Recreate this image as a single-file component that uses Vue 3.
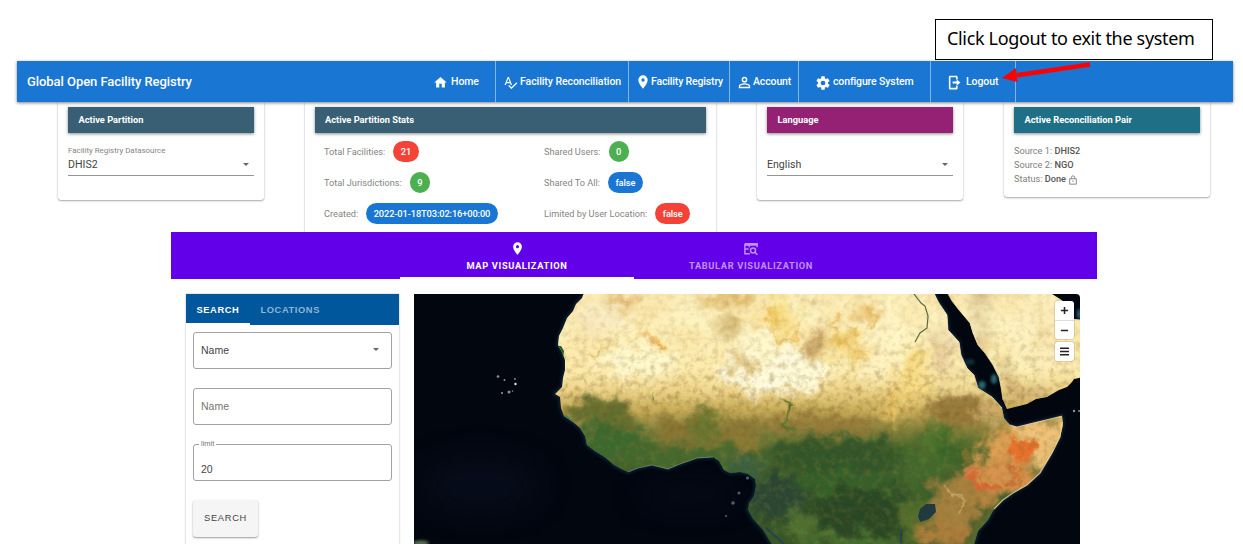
<script setup>
const navItems = [
  { key: 'home', label: 'Home', path: 'M10,20V14H14V20H19V12H22L12,3L2,12H5V20H10Z' },
  { key: 'reconcile', label: 'Facility Reconciliation', path: 'M21.59,11.59L13.5,19.68L9.83,16L8.42,17.41L13.5,22.5L23,13M6.43,11L8.5,5.5L10.57,11M12.45,16H14.54L9.43,3H7.57L2.46,16H4.55L5.67,13H11.31L12.45,16Z' },
  { key: 'registry', label: 'Facility Registry', path: 'M12,11.5A2.5,2.5 0 0,1 9.5,9A2.5,2.5 0 0,1 12,6.5A2.5,2.5 0 0,1 14.5,9A2.5,2.5 0 0,1 12,11.5M12,2A7,7 0 0,0 5,9C5,14.25 12,22 12,22C12,22 19,14.25 19,9A7,7 0 0,0 12,2Z' },
  { key: 'account', label: 'Account', path: 'M12,4A4,4 0 0,1 16,8A4,4 0 0,1 12,12A4,4 0 0,1 8,8A4,4 0 0,1 12,4M12,6A2,2 0 0,0 10,8A2,2 0 0,0 12,10A2,2 0 0,0 14,8A2,2 0 0,0 12,6M12,13C14.67,13 20,14.33 20,17V20H4V17C4,14.33 9.33,13 12,13M12,14.9C9.03,14.9 5.9,16.36 5.9,17V18.1H18.1V17C18.1,16.36 14.97,14.9 12,14.9Z' },
  { key: 'configure', label: 'configure System', path: 'M12,15.5A3.5,3.5 0 0,1 8.5,12A3.5,3.5 0 0,1 12,8.5A3.5,3.5 0 0,1 15.5,12A3.5,3.5 0 0,1 12,15.5M19.43,12.97C19.47,12.65 19.5,12.33 19.5,12C19.5,11.67 19.47,11.34 19.43,11L21.54,9.37C21.73,9.22 21.78,8.95 21.66,8.73L19.66,5.27C19.54,5.05 19.27,4.96 19.05,5.05L16.56,6.05C16.04,5.66 15.5,5.32 14.87,5.07L14.5,2.42C14.46,2.18 14.25,2 14,2H10C9.75,2 9.54,2.18 9.5,2.42L9.13,5.07C8.5,5.32 7.96,5.66 7.44,6.05L4.95,5.05C4.73,4.96 4.46,5.05 4.34,5.27L2.34,8.73C2.21,8.95 2.27,9.22 2.46,9.37L4.57,11C4.53,11.34 4.5,11.67 4.5,12C4.5,12.33 4.53,12.65 4.57,12.97L2.46,14.63C2.27,14.78 2.21,15.05 2.34,15.27L4.34,18.73C4.46,18.95 4.73,19.03 4.95,18.95L7.44,17.94C7.96,18.34 8.5,18.68 9.13,18.93L9.5,21.58C9.54,21.82 9.75,22 10,22H14C14.25,22 14.46,21.82 14.5,21.58L14.87,18.93C15.5,18.67 16.04,18.34 16.56,17.94L19.05,18.95C19.27,19.03 19.54,18.95 19.66,18.73L21.66,15.27C21.78,15.05 21.73,14.78 21.54,14.63L19.43,12.97Z' },
  { key: 'logout', label: 'Logout', path: 'M4,1H15A2,2 0 0 1 17,3V7H14.5V3.500H5.500V20.500H14.5V17H17V21A2,2 0 0 1 15,23H5A2,2 0 0 1 3,21V3A2,2 0 0 1 5,1ZM9,10.500H15.5V7L21.5,12L15.5,17V13.500H9Z' },
]
const marker = navItems[2].path

const statsLeft = [
  { label: 'Total Facilities:', value: '21', color: 'red' },
  { label: 'Total Jurisdictions:', value: '9', color: 'green' },
  { label: 'Created:', value: '2022-01-18T03:02:16+00:00', color: 'blue' },
]
const statsRight = [
  { label: 'Shared Users:', value: '0', color: 'green' },
  { label: 'Shared To All:', value: 'false', color: 'blue' },
  { label: 'Limited by User Location:', value: 'false', color: 'red' },
]

const africa = 'M585,290 L582,298 576,304 573,311 567,318 563,328 559,336 558,345 562,352 565,360 565,370 563,378 562,387 555,394 560,397 561,408 564,416 573,422 580,428 585,436 587,445 595,451 606,458 614,465 621,469 628,472 638,468 652,465 668,469 680,464 697,458 713,457 719,461 724,470 730,473 740,472 748,474 755,479 756,486 754,496 749,503 748,510 753,519 763,530 774,548 973,548 978,531 988,520 994,509 1003,500 1013,493 1027,485 1040,473 1052,453 1060,437 1063,425 1062,416 1050,419 1033,423 1017,427 1010,425 1004,418 1002,408 992,397 978,388 974,375 967,368 961,355 959,342 948,330 947,315 939,303 933,290Z'
const arabia = 'M946,290 L952,301 959,310 970,323 973,333 978,345 985,353 993,365 999,377 1001,387 1003,400 1007,409 1027,404 1036,399 1047,397 1059,390 1067,387 1072,382 1074,379 1084,377 1084,320 1074,319 1070,306 1060,299 1052,294 1050,290Z'
</script>

<template>
  <div class="page">
    <header class="navbar">
      <div class="brand">Global Open Facility Registry</div>
      <nav class="nav">
        <a v-for="item in navItems" :key="item.key" class="nav-item" :class="item.key">
          <svg class="nav-icon" viewBox="0 0 24 24"><path :d="item.path" fill-rule="evenodd" /></svg>
          <span>{{ item.label }}</span>
        </a>
      </nav>
    </header>

    <section class="cards">
      <article class="card">
        <h3 class="card-title slate">Active Partition</h3>
        <label class="select-label">Facility Registry Datasource</label>
        <div class="select"><span>DHIS2</span><i class="caret"></i></div>
      </article>
      <article class="card tall">
        <h3 class="card-title slate stats-title">Active Partition Stats</h3>
        <div class="stats">
          <div class="stat-col">
            <div v-for="s in statsLeft" :key="s.label" class="stat">
              <span>{{ s.label }}</span><b class="chip" :class="s.color">{{ s.value }}</b>
            </div>
          </div>
          <div class="stat-col">
            <div v-for="s in statsRight" :key="s.label" class="stat">
              <span>{{ s.label }}</span><b class="chip" :class="s.color">{{ s.value }}</b>
            </div>
          </div>
        </div>
      </article>
      <article class="card">
        <h3 class="card-title plum">Language</h3>
        <label class="select-label"></label>
        <div class="select"><span>English</span><i class="caret"></i></div>
      </article>
      <article class="card pair">
        <h3 class="card-title teal">Active Reconciliation Pair</h3>
        <p>Source 1: <b>DHIS2</b></p>
        <p>Source 2: <b>NGO</b></p>
        <p>Status: <b>Done</b>
          <svg class="lock" viewBox="0 0 24 24"><path d="M4 9H20V22H4ZM8 9V6A4 4 0 0 1 16 6V9M12 13V17" /></svg>
        </p>
      </article>
    </section>

    <section class="view-tabs">
      <div class="view-tab active">
        <svg class="tab-icon" viewBox="0 0 24 24"><path :d="marker" fill-rule="evenodd" /></svg>
        <span>MAP VISUALIZATION</span>
      </div>
      <div class="view-tab">
        <svg class="tab-icon table" viewBox="0 0 24 24">
          <path d="M1.500 3H22.500V9M1.500 3V20H10M1.500 5H22.500M1.500 12H8M9 5V9" />
          <circle cx="15.500" cy="14.500" r="4.300" /><path d="M18.500 17.500L23 22" />
        </svg>
        <span>TABULAR VISUALIZATION</span>
      </div>
    </section>

    <main class="workspace">
      <aside class="panel">
        <div class="panel-tabs">
          <span class="panel-tab active">SEARCH</span>
          <span class="panel-tab">LOCATIONS</span>
        </div>
        <div class="form">
          <div class="field"><span>Name</span><i class="caret"></i></div>
          <div class="field placeholder"><span>Name</span></div>
          <div class="field limit"><label>limit</label><span>20</span></div>
          <button class="search-btn">SEARCH</button>
        </div>
      </aside>

      <div class="map">
        <svg class="map-canvas" viewBox="414 294 666 250" preserveAspectRatio="none" color-interpolation-filters="sRGB">
          <defs>
            <linearGradient id="climate" gradientUnits="userSpaceOnUse" x1="0" y1="294" x2="0" y2="544">
              <stop offset="0" stop-color="#fbe8ae" />
              <stop offset=".3" stop-color="#fdebac" />
              <stop offset=".38" stop-color="#efd488" />
              <stop offset=".47" stop-color="#c9ac59" />
              <stop offset=".54" stop-color="#86823d" />
              <stop offset=".62" stop-color="#4a682c" />
              <stop offset=".8" stop-color="#33572a" />
              <stop offset="1" stop-color="#365527" />
            </linearGradient>
            <linearGradient id="dry" x1="0" y1="0" x2="0" y2="1">
              <stop offset=".45" stop-color="#fff" /><stop offset=".9" stop-color="#000" />
            </linearGradient>
            <linearGradient id="wet" x1="0" y1="0" x2="0" y2="1">
              <stop offset=".1" stop-color="#555" /><stop offset=".45" stop-color="#fff" /><stop offset=".6" stop-color="#999" />
            </linearGradient>
            <mask id="desert"><rect x="540" y="290" width="545" height="130" fill="url(#dry)" /></mask>
            <mask id="savanna"><rect x="540" y="290" width="545" height="260" fill="url(#wet)" /></mask>
            <clipPath id="land"><path :d="africa" /><path :d="arabia" /></clipPath>
            <filter id="soft14" x="-50%" y="-80%" width="200%" height="260%"><feGaussianBlur stdDeviation="14" /></filter>
            <filter id="soft5" x="-50%" y="-50%" width="200%" height="200%"><feGaussianBlur stdDeviation="4.500" /></filter>
            <filter id="soft2" x="-50%" y="-50%" width="200%" height="200%"><feGaussianBlur stdDeviation="1.600" /></filter>
            <filter id="rough" x="-5%" y="-5%" width="110%" height="110%">
              <feTurbulence type="fractalNoise" baseFrequency=".055" numOctaves="5" seed="4" result="n" />
              <feDisplacementMap in="SourceGraphic" in2="n" scale="34" xChannelSelector="R" yChannelSelector="G" />
              <feGaussianBlur stdDeviation=".6" />
            </filter>
            <filter id="grain" x="0" y="0" width="100%" height="100%">
              <feTurbulence type="fractalNoise" baseFrequency=".16" numOctaves="4" seed="11" />
              <feColorMatrix values="0 0 0 0 .45  0 0 0 0 .34  0 0 0 0 .12  1.500 1.500 0 0 -1.350" />
            </filter>
            <filter id="speckle" x="0" y="0" width="100%" height="100%">
              <feTurbulence type="fractalNoise" baseFrequency=".14" numOctaves="4" seed="37" />
              <feColorMatrix values="0 0 0 0 .60  0 0 0 0 .64  0 0 0 0 .30  1.500 1.500 0 0 -1.400" />
            </filter>
            <filter id="glow" x="0" y="0" width="100%" height="100%">
              <feTurbulence type="fractalNoise" baseFrequency=".018 .026" numOctaves="5" seed="29" />
              <feColorMatrix values="0 0 0 0 1  0 0 0 0 .98  0 0 0 0 .8  2.200 2 0 0 -1.750" />
            </filter>
          </defs>
          <rect x="414" y="294" width="666" height="250" fill="#02060f" />
          <g filter="url(#soft14)" fill="#080e1e">
            <ellipse cx="480" cy="485" rx="60" ry="28" opacity=".7" /><ellipse cx="690" cy="495" rx="50" ry="10" opacity=".6" />
          </g>
          <path :d="africa" fill="none" stroke="#102c42" stroke-width="4" filter="url(#soft2)" opacity=".7" />
          <g clip-path="url(#land)">
            <rect x="414" y="294" width="666" height="250" fill="url(#climate)" />
            <g filter="url(#rough)">
              <g filter="url(#soft5)">
                <ellipse cx="640" cy="362" rx="40" ry="12" fill="#fff8cc" />
                <ellipse cx="775" cy="372" rx="55" ry="22" fill="#fffadc" />
                <ellipse cx="755" cy="352" rx="22" ry="24" fill="#fff6cc" />
                <ellipse cx="875" cy="335" rx="30" ry="40" fill="#fff3c0" />
                <ellipse cx="605" cy="318" rx="28" ry="15" fill="#f8e2ba" />
                <ellipse cx="780" cy="314" rx="14" ry="24" fill="#f8d675" />
                <ellipse cx="848" cy="350" rx="22" ry="18" fill="#f4d275" />
                <ellipse cx="866" cy="312" rx="12" ry="12" fill="#eecb80" />
                <ellipse cx="817" cy="343" rx="11" ry="15" fill="#c8a263" />
                <ellipse cx="813" cy="297" rx="8" ry="4" fill="#b38a4c" />
                <ellipse cx="728" cy="327" rx="12" ry="10" fill="#d7ba74" />
                <ellipse cx="745" cy="362" rx="8" ry="14" fill="#dfc17c" />
                <ellipse cx="720" cy="300" rx="34" ry="6" fill="#dcb561" />
                <ellipse cx="620" cy="299" rx="18" ry="5" fill="#e0b76f" />
                <ellipse cx="912" cy="375" rx="14" ry="25" fill="#f8dc84" />
                <ellipse cx="893" cy="408" rx="14" ry="14" fill="#e9c567" />
                <ellipse cx="945" cy="345" rx="12" ry="38" fill="#ead09c" />
                <ellipse cx="955" cy="410" rx="28" ry="18" fill="#98793c" />
                <ellipse cx="820" cy="424" rx="62" ry="7" fill="#97793a" />
                <ellipse cx="705" cy="430" rx="50" ry="13" fill="#8a7635" />
                <ellipse cx="600" cy="412" rx="35" ry="14" fill="#656e2f" />
                <ellipse cx="610" cy="442" rx="36" ry="20" fill="#3b6930" />
                <ellipse cx="680" cy="456" rx="65" ry="11" fill="#44692f" />
                <ellipse cx="705" cy="425" rx="16" ry="13" fill="#667530" />
                <ellipse cx="742" cy="440" rx="17" ry="12" fill="#8b7936" />
                <ellipse cx="745" cy="465" rx="22" ry="9" fill="#3a6040" />
                <ellipse cx="838" cy="456" rx="68" ry="18" fill="#31552a" />
                <ellipse cx="840" cy="483" rx="60" ry="11" fill="#35602a" />
                <ellipse cx="778" cy="497" rx="28" ry="22" fill="#294633" />
                <ellipse cx="855" cy="512" rx="46" ry="24" fill="#284725" />
                <ellipse cx="800" cy="524" rx="16" ry="14" fill="#4e7132" />
                <ellipse cx="850" cy="541" rx="55" ry="6" fill="#4a7331" />
                <ellipse cx="920" cy="465" rx="24" ry="22" fill="#42692d" />
                <ellipse cx="940" cy="440" rx="18" ry="18" fill="#4f752e" />
                <ellipse cx="947" cy="448" rx="12" ry="12" fill="#326529" />
                <ellipse cx="1040" cy="440" rx="30" ry="26" fill="#f0c279" />
                <ellipse cx="1004" cy="450" rx="24" ry="18" fill="#e0a055" />
                <ellipse cx="1000" cy="477" rx="38" ry="16" fill="#d8944d" />
                <ellipse cx="955" cy="505" rx="24" ry="30" fill="#a6803f" />
                <ellipse cx="918" cy="518" rx="18" ry="26" fill="#526d2c" />
                <ellipse cx="948" cy="535" rx="30" ry="12" fill="#ad7d3d" />
                <ellipse cx="988" cy="500" rx="16" ry="8" fill="#b5833f" />
                <ellipse cx="990" cy="412" rx="10" ry="18" fill="#d0ab6e" />
              </g>
              <g filter="url(#soft2)">
                <path d="M630,340 Q648,329 666,341 Q648,347 630,340Z" fill="#eba947" />
                <path d="M595,352 Q612,344 640,326" fill="none" stroke="#e2bd67" stroke-width="3" />
                <path d="M766,300 Q771,330 785,345 Q800,335 803,302" fill="none" stroke="#eabb4d" stroke-width="3" />
                <path d="M835,315 Q830,345 860,361 M850,325 Q852,345 868,352 M868,300 Q866,320 877,332" fill="none" stroke="#e7b956" stroke-width="2.500" />
                <path d="M1008,444 Q1025,435 1036,445 Q1028,454 1020,472 Q1013,454 1008,444Z" fill="#ea6f2d" />
                <ellipse cx="984" cy="484" rx="16" ry="6" fill="#d96a36" />
                <ellipse cx="974" cy="471" rx="9" ry="5" fill="#cc7a44" />
                <ellipse cx="1010" cy="477" rx="9" ry="5" fill="#cf6f38" />
                <ellipse cx="970" cy="456" rx="11" ry="6" fill="#75702f" />
                <path d="M948,482l9,14 2,16" stroke="#dcb87a" stroke-width="3" fill="none" />
                <path d="M780,398l8,6 8,4 -6,4 6,14 -3,5 -5,-16z" fill="#4b732a" />
                <path d="M648,401l7,-14 -2,15z" fill="#4b7328" />
              </g>
            </g>
            <path d="M1001,507 L996,548 L965,548 975,526 988,511 1003,498 1012,493Z" fill="#53692f" filter="url(#soft2)" />
            <g filter="url(#soft5)">
              <ellipse cx="980" cy="318" rx="11" ry="34" fill="#d2b17c" opacity=".8" />
              <ellipse cx="1040" cy="335" rx="28" ry="38" fill="#fbe8b2" />
              <path d="M1038,300Q1050,325 1032,350" fill="none" stroke="#edcb7e" stroke-width="5" />
              <path d="M1002,360L1015,395L1045,390" fill="none" stroke="#ceac73" stroke-width="12" opacity=".8" />
            </g>
            <g mask="url(#desert)"><rect x="540" y="290" width="545" height="130" filter="url(#glow)" opacity=".6" /></g>
            <g mask="url(#savanna)"><rect x="540" y="290" width="545" height="260" filter="url(#grain)" opacity=".42" /></g>
            <rect x="540" y="400" width="545" height="150" filter="url(#speckle)" opacity=".22" />
            <path d="M920,509l6,-5 9,0 1,8 -7,7 -9,3 -2,-6z" fill="#203a40" />
            <path d="M902,546q-2,-10 0,-16M766,528l18,16" stroke="#203d5c" stroke-width="2" fill="none" opacity=".8" />
            <path d="M914,294l7,9 4,3 3,10 -1,12 -7,5 -5,9" stroke="#5d6a3f" stroke-width="1.200" fill="none" />
            <path d="M556,346l5,0 3,5 -1,8 -4,-2z" fill="#1e5a2c" />
            <path d="M560,414l8,2 5,6 -4,2 -8,-5z" fill="#417c5c" />
          </g>
          <path d="M933,294 L939,303 947,315 948,330 959,342 961,355 967,368 974,375 978,388 992,397 1002,408 M1010,425 L1017,427 1033,423 1050,419 1062,416 M948,294 L952,301 959,310 970,323 973,333 978,345 985,353 993,365 999,377 1001,387 1003,400" stroke="#f2dca8" stroke-width="1" fill="none" opacity=".7" />
          <path d="M1062,422L1060,437 1052,453 1040,473 1027,485 1013,493 1003,500 994,509" stroke="#f3dca0" stroke-width="1.200" fill="none" opacity=".75" />
          <path d="M628,472 L638,468 652,465 668,469 680,464 697,458 713,457" stroke="#8ca588" stroke-width="1" fill="none" opacity=".55" />
          <g filter="url(#soft2)" fill="#2d6873">
            <ellipse cx="982" cy="385" rx="3.500" ry="4" /><ellipse cx="994" cy="379" rx="3" ry="5" />
            <ellipse cx="970" cy="362" rx="5" ry="3" opacity=".4" />
            <ellipse cx="1079" cy="314" rx="2" ry="5" />
            <ellipse cx="421" cy="543" rx="8" ry="2.500" fill="#5d7759" />
          </g>
          <g fill="#8a929b">
            <circle cx="498" cy="376.500" r="1.300" /><circle cx="504.500" cy="380" r="1" /><circle cx="515" cy="379" r=".9" />
            <circle cx="515.500" cy="384" r="1.200" fill="#e3e8ec" /><circle cx="509" cy="392" r="1.500" /><circle cx="502" cy="393" r="1.100" /><circle cx="512.500" cy="391" r=".8" />
            <g fill="#4b6070"><circle cx="747.500" cy="478" r="1.600" /><circle cx="739" cy="493" r="1.500" /><circle cx="733" cy="503" r="1.800" /><circle cx="726" cy="516" r="1" /></g>
            <circle cx="1074" cy="411" r="1.200" /><circle cx="1079" cy="411" r="1" />
          </g>
        </svg>
        <div class="map-controls">
          <div class="zoom-group">
            <button><svg viewBox="0 0 10 10"><path d="M5 1V9M1 5H9" /></svg></button>
            <button><svg viewBox="0 0 10 10"><path d="M1 5H9" /></svg></button>
          </div>
          <button class="layers"><svg viewBox="0 0 10 10"><path d="M0 1.300H10M0 5H10M0 8.700H10" /></svg></button>
        </div>
      </div>
    </main>

    <div class="callout">Click Logout to exit the system</div>
    <svg class="arrow" viewBox="0 0 95 30"><path d="M89 4.500L16 15.300" /><polygon points="1,18 15,8 16.500,22" /></svg>
  </div>
</template>

<style>
body { background: #fff; }
</style>

<style scoped>
* { box-sizing: border-box; }
.page { position: relative; width: 1243px; height: 544px; overflow: hidden; padding-top: 61px; font-family: Roboto, "Liberation Sans", sans-serif; color: #555; background: #fff; white-space: nowrap; }
.navbar { position: relative; z-index: 2; display: flex; width: 1216px; height: 41px; margin-left: 17px; background: #1976d2; color: #fff; box-shadow: 0 1px 3px rgba(0,0,0,.5); }
.brand { width: 403px; padding-left: 10px; font-size: 13px; font-weight: 500; line-height: 41px; letter-spacing: -.06px; }
.nav { display: flex; }
.nav-item { display: flex; align-items: center; height: 41px; border-right: 1px solid #83b5e7; font-size: 10.500px; font-weight: 500; letter-spacing: -.07px; }
.nav-item span { position: relative; top: -.5px; }
.nav-icon { flex: none; width: 15px; height: 15px; margin-top: 2px; fill: #fff; }
.home { width: 76px; padding-left: 13px; gap: 3px; }
.reconcile { width: 133px; padding-left: 7px; gap: 2px; }
.registry { width: 101px; padding-left: 6px; letter-spacing: -.16px; }
.registry .nav-icon { width: 16px; height: 16px; margin-top: 1px; }
.account { width: 69px; padding-left: 6px; letter-spacing: -.12px; }
.account .nav-icon { width: 17px; height: 17px; }
.configure { width: 132px; padding-left: 16px; gap: 2px; letter-spacing: -.12px; }
.configure .nav-icon { width: 16px; height: 16px; }
.logout { width: 85px; padding-left: 16px; gap: 4px; }

.cards { display: grid; grid-template-columns: 206px 411px 206px 206px; column-gap: 41px; align-items: start; height: 130px; padding-left: 58px; overflow: hidden; }
.card { height: 98px; padding: 5px 10.500px 0 10px; border-radius: 0 0 3px 3px; box-shadow: 0 1px 2px rgba(0,0,0,.33), 0 0 1px rgba(0,0,0,.2); }
.card.tall { height: 150px; padding-right: 10px; }
.card-title { height: 26px; margin: 0; padding-left: 10.500px; line-height: 26px; color: #fff; font-size: 9.300px; font-weight: 700; box-shadow: 0 1px 3px rgba(0,0,0,.45); }
.stats-title { padding-left: 10px; }
.slate { background: #385f73; }
.plum { background: #952175; }
.teal { background: #1f7087; }
.select-label { display: block; height: 25px; padding-top: 12px; font-size: 7.900px; line-height: 12px; color: #858585; }
.select { display: flex; align-items: center; justify-content: space-between; height: 18px; padding: 1px 5px 5px 0; border-bottom: 1px solid #949494; font-size: 10.600px; line-height: 12px; color: #444; }
.caret { width: 0; height: 0; border: 3.500px solid transparent; border-top: 3.500px solid #666; border-bottom: 0; }
.stats { display: grid; grid-template-columns: 220px 1fr; padding: 8px 0 0 9px; font-size: 9.200px; color: #858585; }
.stat { display: flex; align-items: center; gap: 8px; height: 21px; margin-bottom: 10px; }
.chip { height: 21px; padding: 0 7.500px; border-radius: 11px; color: #fff; font-size: 9.300px; font-weight: 500; line-height: 21px; letter-spacing: -.12px; }
.red { background: #f44336; }
.green { background: #4caf50; }
.blue { background: #1976d2; }
.pair { height: 95px; }
.pair .card-title { margin-bottom: 10.500px; }
.pair p { margin: 0; height: 14.400px; line-height: 14.400px; font-size: 9.200px; color: #808080; }
.pair b { font-weight: 500; color: #555; }
.lock { width: 10px; height: 10px; margin-left: 2px; vertical-align: -2.500px; fill: none; stroke: #808080; stroke-width: 2.200; }

.view-tabs { display: flex; justify-content: center; width: 926px; height: 47px; margin-left: 171px; background: #6200ea; }
.view-tab { display: flex; flex-direction: column; align-items: center; width: 234px; height: 47px; padding-top: 9px; color: #c091f6; font-size: 9.300px; font-weight: 700; letter-spacing: .64px; line-height: 12px; }
.view-tab.active { color: #fff; border-bottom: 2px solid #fff; }
.tab-icon { width: 15px; height: 15px; margin-bottom: 4px; fill: currentColor; }
.tab-icon.table { width: 14px; height: 14px; margin: 1px 0 4px; fill: none; stroke: currentColor; stroke-width: 2.500; }

.workspace { display: flex; gap: 15px; height: 265px; padding: 15px 0 0 186px; }
.panel { width: 213px; height: 260px; box-shadow: 0 0 2px rgba(0,0,0,.3); font-family: "Liberation Sans", Arial, sans-serif; }
.panel-tabs { display: flex; height: 31px; background: #01579b; }
.panel-tab { height: 31px; padding: 0 10.500px; color: #8db5d6; font-size: 9.300px; font-weight: 700; letter-spacing: .6px; line-height: 32px; }
.panel-tab.active { width: 64px; color: #fff; border-bottom: 2px solid #fff; }
.form { padding: 7px 7px 0; }
.field { position: relative; display: flex; align-items: center; justify-content: space-between; height: 37px; margin-bottom: 19px; padding: 0 12px 2px 7px; border: 1px solid #a2a2a2; border-radius: 3px; font-size: 10.500px; color: #444; }
.field.placeholder { color: #757575; }
.field.limit { padding-top: 14px; }
.limit label { position: absolute; left: 5px; top: -6px; padding: 0 2px; background: #fff; font-size: 7.500px; line-height: 10px; color: #777; }
.search-btn { width: 65px; height: 37px; padding: 0 0 2px; border: 0; border-radius: 3px; background: #f5f5f5; box-shadow: 0 1px 2px rgba(0,0,0,.4); font-family: inherit; font-size: 9.300px; letter-spacing: .7px; color: #444; }

.map { position: relative; width: 666px; height: 250px; border-radius: 0 4px 0 0; overflow: hidden; }
.map-canvas { display: block; width: 666px; height: 250px; }
.map-controls { position: absolute; top: 7px; right: 6px; display: flex; flex-direction: column; gap: 3px; }
.map-controls button { display: grid; place-items: center; width: 19px; height: 19px; padding: 0; border: 0; background: #fff; }
.zoom-group { overflow: hidden; border-radius: 3px; box-shadow: 0 0 0 1px rgba(0,0,0,.1); }
.zoom-group button + button { border-top: 1px solid #ddd; }
.map-controls .layers { border-radius: 3px; box-shadow: 0 0 0 1px rgba(0,0,0,.1); }
.map-controls svg { width: 9px; height: 9px; stroke: #222; stroke-width: 1.700; fill: none; }

.callout { position: absolute; z-index: 3; left: 935px; top: 19px; width: 278px; height: 41px; padding-left: 11px; border: 1px solid #000; background: #fff; color: #000; font: 18px/37px "Noto Sans", "Open Sans", sans-serif; letter-spacing: -.33px; }
.arrow { position: absolute; z-index: 4; left: 1001px; top: 60px; width: 95px; height: 30px; fill: #fe0000; }
.arrow path { fill: none; stroke: #fe0000; stroke-width: 4.500; }
</style>
